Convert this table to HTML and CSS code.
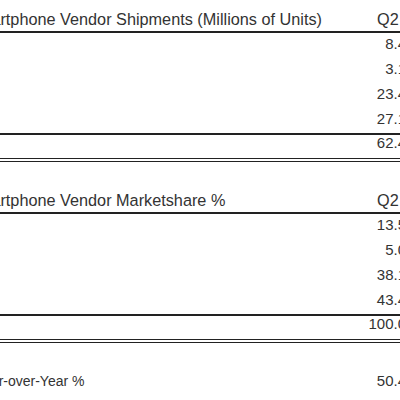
FILE: index.html
```html
<!DOCTYPE html>
<html lang="en">
<head>
  <meta charset="UTF-8">
  <meta name="viewport" content="width=device-width, initial-scale=1.0">
  <title>Smartphone Vendor Report</title>
  <link rel="stylesheet" href="styles.css">
</head>
<body>
  <div class="sheet">
    <div class="report">
      <div class="row head">
        <div class="label">Smartphone Vendor Shipments (Millions of Units)</div>
        <div class="value">Q2 2013</div>
      </div>
      <div class="row"><div class="label"></div><div class="value">8.4</div></div>
      <div class="row"><div class="label"></div><div class="value">3.1</div></div>
      <div class="row"><div class="label"></div><div class="value">23.4</div></div>
      <div class="row last"><div class="label"></div><div class="value">27.1</div></div>
      <div class="row total"><div class="label"></div><div class="value">62.4</div></div>
    </div>

    <div class="report">
      <div class="row head">
        <div class="label">Smartphone Vendor Marketshare %</div>
        <div class="value">Q2 2013</div>
      </div>
      <div class="row"><div class="label"></div><div class="value">13.5</div></div>
      <div class="row"><div class="label"></div><div class="value">5.0</div></div>
      <div class="row"><div class="label"></div><div class="value">38.1</div></div>
      <div class="row last"><div class="label"></div><div class="value">43.4</div></div>
      <div class="row total"><div class="label"></div><div class="value">100.0</div></div>
    </div>

    <div class="row growth">
      <div class="label">Year-over-Year %</div>
      <div class="value">50.4</div>
    </div>
  </div>
</body>
</html>
```

FILE: styles.css
```css
html, body {
  margin: 0;
  overflow: hidden;
  background: #fff;
}

body {
  font-family: 'Liberation Sans', Arial, sans-serif;
  font-size: 14px;
  line-height: 16px;
  color: #333;
}

.sheet {
  width: 465px;
  margin-left: -35px;
}

.report {
  border-bottom: 4px double #222;
  margin-bottom: 19px;
}

.row {
  display: flex;
  white-space: nowrap;
  height: 25px;
  box-sizing: border-box;
  padding-top: 3px;
}

.label {
  flex: 1;
  padding-left: 2px;
}

.value {
  width: 80px;
  padding-right: 24px;
  text-align: right;
  box-sizing: border-box;
  font-size: 15px;
}

.row.head {
  height: 33px;
  padding-top: 11px;
  border-bottom: 2px solid #222;
  font-size: 16.25px;
}

.row.head .value {
  text-align: left;
  padding-left: 27px;
  padding-right: 0;
  font-size: 16.25px;
}

.row.last {
  height: 27px;
  border-bottom: 2px solid #222;
}

.row.total {
  height: 23px;
  padding-top: 0;
}

.row.growth {
  height: 33px;
  padding-top: 11px;
}

.row.growth .label {
  padding-left: 10px;
}
```
